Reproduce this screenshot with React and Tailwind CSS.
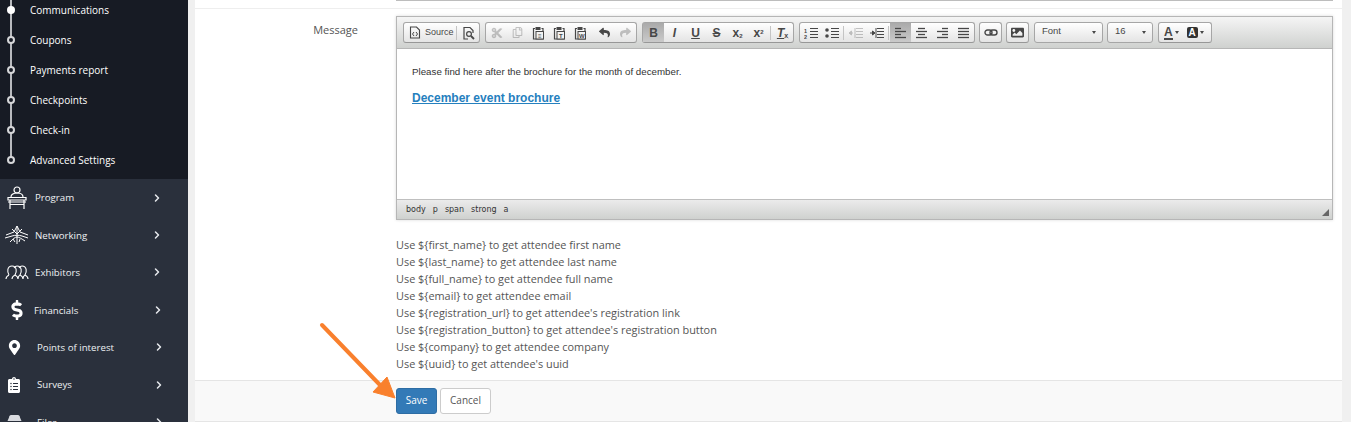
import React from "react";
import {
  FaDollarSign,
  FaMapMarkerAlt,
  FaClipboardList,
  FaCut,
  FaRegCopy,
  FaReply,
  FaShare,
  FaImage,
} from "react-icons/fa";
import { ChevronRight } from "lucide-react";

const SUB_ITEMS = ["Communications", "Coupons", "Payments report", "Checkpoints", "Check-in", "Advanced Settings"];

const HINTS = [
  "Use ${first_name} to get attendee first name",
  "Use ${last_name} to get attendee last name",
  "Use ${full_name} to get attendee full name",
  "Use ${email} to get attendee email",
  "Use ${registration_url} to get attendee's registration link",
  "Use ${registration_button} to get attendee's registration button",
  "Use ${company} to get attendee company",
  "Use ${uuid} to get attendee's uuid",
];

// sidebar line icons
function ProgramIcon() {
  return (
    <svg width="20" height="24" viewBox="0 0 20 24" fill="none" stroke="#fff" strokeWidth="1.2">
      <circle cx="10" cy="4" r="3" />
      <path d="M4 11c0-3 3-4 6-4s6 1 6 4" />
      <path d="M1 11.5h18v2.5H1zM1 16h18M3 14v9M17 14v9M3 18.5h14" />
    </svg>
  );
}

function NetworkingIcon() {
  return (
    <svg width="24" height="20" viewBox="0 0 24 20" fill="none" stroke="#fff" strokeWidth="1">
      <path d="M1 10l8-3 3-6 3 6 8 3M0 13l7-2c3-1 7-1 10 0l6 2M12 1v18M7 4l5 5 5-5M5 17c3-3 5-5 7-5s5 2 8 4M8 14l2 3M15 14l-1 3" />
    </svg>
  );
}

function ExhibitorsIcon() {
  return (
    <svg width="24" height="15" viewBox="0 0 24 15" fill="none" stroke="#fff" strokeWidth="1.1">
      <path d="M4 10C2 7 2 1 7 1s5 6 3 9" />
      <path d="M9 3c1-1.500 2-2 3-2 5 0 5 6 3 9" />
      <path d="M14 3c1-1.500 2-2 3-2 5 0 5 6 3 9" />
      <path d="M1 14c0-2 1-3 3-4M10 10c-2 1-3 2-3 4M10 10c2 1 3 2 3 4M15 10c-2 1-2 2-2 4M15 10c2 1 3 2 3 4M20 10c-2 1-2 2-2 4M20 10c2 1 3 2 3 4" />
    </svg>
  );
}

function FilesIcon() {
  return (
    <svg width="15" height="14" viewBox="0 0 15 14" fill="#fff">
      <path d="M2 2.500C2 1 3 0 4 0h7c1 0 2 1 2 2.500L14.500 6h-14z" fill="#d9dbe0" />
      <rect x="0.5" y="7" width="14" height="7" rx="1" />
    </svg>
  );
}

const MAIN_ITEMS = [
  { label: "Program", icon: <ProgramIcon />, iconClass: "pl-[7px] w-[35px]", textW: "w-[116px]" },
  { label: "Networking", icon: <NetworkingIcon />, iconClass: "pl-[5px] w-[35px]", textW: "w-[116px]" },
  { label: "Exhibitors", icon: <ExhibitorsIcon />, iconClass: "pl-[5px] w-[35px]", textW: "w-[116px]" },
  { label: "Financials", icon: <FaDollarSign size={20} color="#fff" />, iconClass: "pl-[7px] w-[34px]", textW: "w-[118px]" },
  { label: "Points of interest", icon: <FaMapMarkerAlt size={15} color="#fff" />, iconClass: "pl-[7px] w-[37px]", textW: "w-[116px]" },
  { label: "Surveys", icon: <FaClipboardList size={16} color="#fff" />, iconClass: "pl-[6px] w-[37px]", textW: "w-[116px]" },
  { label: "Files", icon: <FilesIcon />, iconClass: "pl-[7px] w-[37px]", textW: "w-[116px]" },
];

function Sidebar() {
  return (
    <aside className="w-[188px] h-full shrink-0 flex flex-col bg-[#2a303c] text-white overflow-hidden font-['Open_Sans',sans-serif]">
      <div className="relative h-[179px] shrink-0 bg-[#171b24] flex flex-col justify-end pb-[4px] overflow-hidden">
        <div className="absolute left-[10px] top-0 h-[160px] w-[2px] bg-[#b9bbbf]" />
        {SUB_ITEMS.map((item, i) => (
          <div key={item} className="relative h-[30px] shrink-0 flex items-center pl-[7px]">
            <span
              className={
                i === 0
                  ? "w-[8px] h-[8px] rounded-full bg-white border-2 border-white"
                  : "w-[8px] h-[8px] rounded-full bg-[#171b24] border-2 border-[#d5d6d8]"
              }
            />
            <span className="ml-[15px] text-[10px] text-white">{item}</span>
          </div>
        ))}
      </div>
      {MAIN_ITEMS.map((item) => (
        <div key={item.label} className="h-[37.4px] shrink-0 flex items-center">
          <span className={`${item.iconClass} shrink-0 flex items-center`}>{item.icon}</span>
          <span className={`${item.textW} shrink-0 pt-[2px] text-[9.7px] text-[#eef0f3]`}>{item.label}</span>
          <ChevronRight size={12} strokeWidth={3} color="#e6e8ec" className="shrink-0" />
        </div>
      ))}
    </aside>
  );
}

// toolbar bits
function ToolGroup({ children, className = "" }) {
  return (
    <div className={`h-[21px] flex items-stretch rounded-[3px] border border-[#a6a6a6] border-b-[#979797] bg-linear-to-b from-white to-[#e4e4e4] shrink-0 ${className}`}>
      {children}
    </div>
  );
}

function Btn({ children, active, disabled }) {
  let cls = "w-[21px] flex items-center justify-center text-[#474747] shrink-0";
  if (active) cls += " bg-linear-to-b from-[#aaaaaa] to-[#cacaca]";
  if (disabled) cls += " opacity-30";
  return <button className={cls}>{children}</button>;
}

function Sep() {
  return (
    <span className="w-[3px] flex justify-center items-center shrink-0">
      <span className="w-px h-[14px] bg-[#c4c4c4]" />
    </span>
  );
}

function DocIcon() {
  return (
    <svg width="12" height="13" viewBox="0 0 12 13" fill="none" stroke="#474747" strokeWidth="1.1">
      <path d="M1.500 1h6l3 3v8h-9z" />
      <path d="M5 6L3.500 8 5 10M7 6l1.500 2L7 10" strokeWidth="1" />
    </svg>
  );
}

function PreviewIcon() {
  return (
    <svg width="13" height="14" viewBox="0 0 13 14" fill="none" stroke="#474747" strokeWidth="1.2">
      <path d="M6 13H2V1.500h6l3 3V7" />
      <circle cx="7" cy="8" r="2.400" />
      <path d="M9 10l3 3" strokeWidth="1.800" />
    </svg>
  );
}

function PasteIcon({ letter }) {
  return (
    <svg width="13" height="14" viewBox="0 0 13 14" fill="none" stroke="#474747" strokeWidth="1.2">
      <path d="M3 2.500H1.500v10.500h9.500V2.500H9.500" />
      <rect x="3.500" y="1" width="5" height="3" fill="#474747" stroke="none" />
      <rect x="4" y="5.500" width="7.500" height="7.500" fill="#f2f2f2" strokeWidth="1" />
      <text x="7.800" y="11.800" fontSize="6" textAnchor="middle" fill="#474747" stroke="none" fontFamily="Liberation Sans" fontWeight="700">{letter}</text>
    </svg>
  );
}

function LinkIcon() {
  return (
    <svg width="14" height="7" viewBox="0 0 14 7" fill="none" stroke="#474747" strokeWidth="1.400">
      <rect x="1" y="1" width="7" height="5" rx="2.500" />
      <rect x="6" y="1" width="7" height="5" rx="2.500" />
    </svg>
  );
}

function Lines({ rows }) {
  return (
    <svg width="13" height="12" viewBox="0 0 13 12" stroke="#474747" strokeWidth="1.300">
      {rows.map(([x1, x2], i) => (
        <line key={i} x1={x1} x2={x2} y1={1.5 + i * 3} y2={1.5 + i * 3} />
      ))}
    </svg>
  );
}

function ListIcon({ ordered }) {
  return (
    <svg width="14" height="12" viewBox="0 0 14 12" stroke="#474747" strokeWidth="1.200">
      <path d="M6 1.500h8M6 4.500h8M6 7.500h8M6 10.500h8" />
      {ordered ? (
        <text x="0" y="5.500" fontSize="5.500" fill="#474747" stroke="none" fontFamily="Liberation Sans" fontWeight="700">1</text>
      ) : (
        <circle cx="2" cy="3" r="1.800" fill="#474747" stroke="none" />
      )}
      {ordered ? (
        <text x="0" y="11.500" fontSize="5.500" fill="#474747" stroke="none" fontFamily="Liberation Sans" fontWeight="700">2</text>
      ) : (
        <circle cx="2" cy="9" r="1.800" fill="#474747" stroke="none" />
      )}
    </svg>
  );
}

function IndentIcon({ out }) {
  return (
    <svg width="14" height="12" viewBox="0 0 14 12" fill="#474747" stroke="#474747" strokeWidth="1">
      <path d="M7 1.500h7M7 4.500h7M7 7.500h7M7 10.500h7M0 6h4" fill="none" />
      <path d="M6 1v10" fill="none" />
      {out ? <path d="M0 6l2.500-2v4z" /> : <path d="M5 6L2.500 4v4z" />}
    </svg>
  );
}

function TextBtn({ cls, children, active }) {
  return (
    <Btn active={active}>
      <span className={`font-['Liberation_Sans',sans-serif] text-[12px] leading-none ${cls}`}>{children}</span>
    </Btn>
  );
}

function Caret() {
  return <span className="w-0 h-0 border-x-[2.5px] border-x-transparent border-t-[3px] border-t-[#474747]" />;
}

function Combo({ label, width }) {
  return (
    <div className={`${width} h-[21px] shrink-0 flex items-center justify-between rounded-[3px] border border-[#a6a6a6] bg-linear-to-b from-white to-[#e4e4e4] pl-[7px] pr-[6px] font-['Liberation_Sans',sans-serif] text-[9.5px] text-[#484848]`}>
      <span className="-mt-[2px]">{label}</span>
      <Caret />
    </div>
  );
}

function Toolbar() {
  return (
    <div className="h-[32px] shrink-0 flex items-start gap-[5px] pl-[6px] pt-[5px] border-b border-[#b6b6b6] bg-linear-to-b from-[#f5f5f5] to-[#cfd1cf] font-['Liberation_Sans',sans-serif]">
      <ToolGroup>
        <button className="w-[51px] flex items-center pl-[5px] gap-[4px] text-[9px] text-[#474747]">
          <DocIcon />
          <span>Source</span>
        </button>
        <Sep />
        <Btn><PreviewIcon /></Btn>
      </ToolGroup>
      <ToolGroup>
        <Btn disabled><FaCut size={12} /></Btn>
        <Btn disabled><FaRegCopy size={11} /></Btn>
        <Btn><PasteIcon letter="≡" /></Btn>
        <Btn><PasteIcon letter="T" /></Btn>
        <Btn><PasteIcon letter="W" /></Btn>
        <span className="w-[3px]" />
        <Btn><FaReply size={11} /></Btn>
        <Btn disabled><FaShare size={11} /></Btn>
      </ToolGroup>
      <ToolGroup>
        <TextBtn active cls="font-bold">B</TextBtn>
        <TextBtn cls="italic font-bold">I</TextBtn>
        <TextBtn cls="underline font-bold">U</TextBtn>
        <TextBtn cls="line-through font-bold">S</TextBtn>
        <TextBtn cls="font-bold">x<sub className="text-[6px]">2</sub></TextBtn>
        <TextBtn cls="font-bold">x<sup className="text-[6px]">2</sup></TextBtn>
        <Sep />
        <TextBtn cls="italic font-bold underline">T<sub className="text-[7px] not-italic">x</sub></TextBtn>
      </ToolGroup>
      <ToolGroup>
        <Btn><ListIcon ordered /></Btn>
        <Btn><ListIcon /></Btn>
        <Sep />
        <Btn disabled><IndentIcon out /></Btn>
        <Btn><IndentIcon /></Btn>
        <Sep />
        <Btn active><Lines rows={[[1, 7], [1, 12], [1, 7], [1, 12]]} /></Btn>
        <Btn><Lines rows={[[3, 10], [1, 12], [3, 10], [1, 12]]} /></Btn>
        <Btn><Lines rows={[[6, 12], [1, 12], [6, 12], [1, 12]]} /></Btn>
        <Btn><Lines rows={[[1, 12], [1, 12], [1, 12], [1, 12]]} /></Btn>
      </ToolGroup>
      <ToolGroup className="-ml-px"><Btn><LinkIcon /></Btn></ToolGroup>
      <ToolGroup className="-ml-px"><Btn><FaImage size={13} /></Btn></ToolGroup>
      <Combo label="Font" width="w-[69px]" />
      <Combo label="16" width="w-[46px] -ml-px" />
      <ToolGroup className="w-[54px] pl-[5px] gap-[8px] items-center!">
        <span className="flex items-center gap-[2px]">
          <span className="text-[12px] font-bold leading-[12px] text-[#474747] border-b-2 border-[#474747]">A</span>
          <Caret />
        </span>
        <span className="flex items-center gap-[2px]">
          <span className="w-[11px] h-[11px] rounded-[2px] bg-[#333] text-white text-[10px] font-bold leading-[11px] text-center">A</span>
          <Caret />
        </span>
      </ToolGroup>
    </div>
  );
}

function Editor() {
  return (
    <div className="h-[204px] shrink-0 flex flex-col border border-[#b6b6b6] shadow-[0_0_3px_rgba(0,0,0,0.15)]">
      <Toolbar />
      <div className="h-[150px] shrink-0 bg-white pl-[15px] pt-[16px] font-['Liberation_Sans',sans-serif] text-[#333]">
        <p className="text-[9.75px] leading-[13px]">Please find here after the brochure for the month of december.</p>
        <p className="mt-[13px] text-[12px] leading-[15px] font-bold text-[#2580be] underline">December event brochure</p>
      </div>
      <div className="relative flex-1 flex items-center gap-[7px] pl-[9px] border-t border-[#bfbfbf] bg-linear-to-b from-[#ebebeb] to-[#cfd1cf] font-['DejaVu_Sans',sans-serif] text-[8px] text-[#333]">
        <span>body</span>
        <span>p</span>
        <span>span</span>
        <span>strong</span>
        <span>a</span>
        <span className="absolute right-[3px] bottom-[3px] w-0 h-0 border-l-[7px] border-l-transparent border-b-[7px] border-b-[#666]" />
      </div>
    </div>
  );
}

export default function App() {
  return (
    <div className="relative h-[422px] w-[1351px] flex bg-[#f0f0f0] overflow-hidden font-['Open_Sans',sans-serif]">
      <Sidebar />
      <main className="ml-[7px] mr-[9px] flex-1 h-[422px] flex flex-col bg-white border-b border-[#e5e5e5]">
        <div className="h-[9px] shrink-0 border-b border-[#eeeeee] pl-[201px] pr-[9px]">
          <div className="h-px bg-[#bdbdbd]" />
        </div>
        <div className="flex flex-1 pt-[7px]">
          <label className="w-[163px] shrink-0 text-right text-[11px] text-[#555] pt-[6px]">Message</label>
          <div className="ml-[38px] w-[937px] shrink-0">
            <Editor />
            <div className="mt-[16px] text-[10.9px] leading-[17px] text-[#555]">
              {HINTS.map((h) => (
                <div key={h}>{h}</div>
              ))}
            </div>
          </div>
        </div>
        <div className="h-[41px] shrink-0 border-t border-[#e5e5e5] bg-[#f9f9f9] pl-[201px] pt-[7px] flex gap-[3px]">
          <button className="w-[41px] h-[26px] pb-[2px] rounded-[3px] bg-[#337ab7] border border-[#2e6da4] text-white text-[10px]">Save</button>
          <button className="w-[51px] h-[26px] pb-[2px] rounded-[3px] bg-white border border-[#ccc] text-[#555] text-[10px]">Cancel</button>
        </div>
      </main>
      {/* orange arrow pointing at the save button */}
      <svg className="absolute left-[315px] top-[318px]" width="90" height="95" viewBox="0 0 90 95">
        <path d="M7 7L65 67" stroke="#f9802d" strokeWidth="4" strokeLinecap="round" />
        <path d="M80 80L58 74L72 59z" fill="#f9802d" stroke="#f9802d" strokeWidth="1" strokeLinejoin="round" />
      </svg>
    </div>
  );
}
